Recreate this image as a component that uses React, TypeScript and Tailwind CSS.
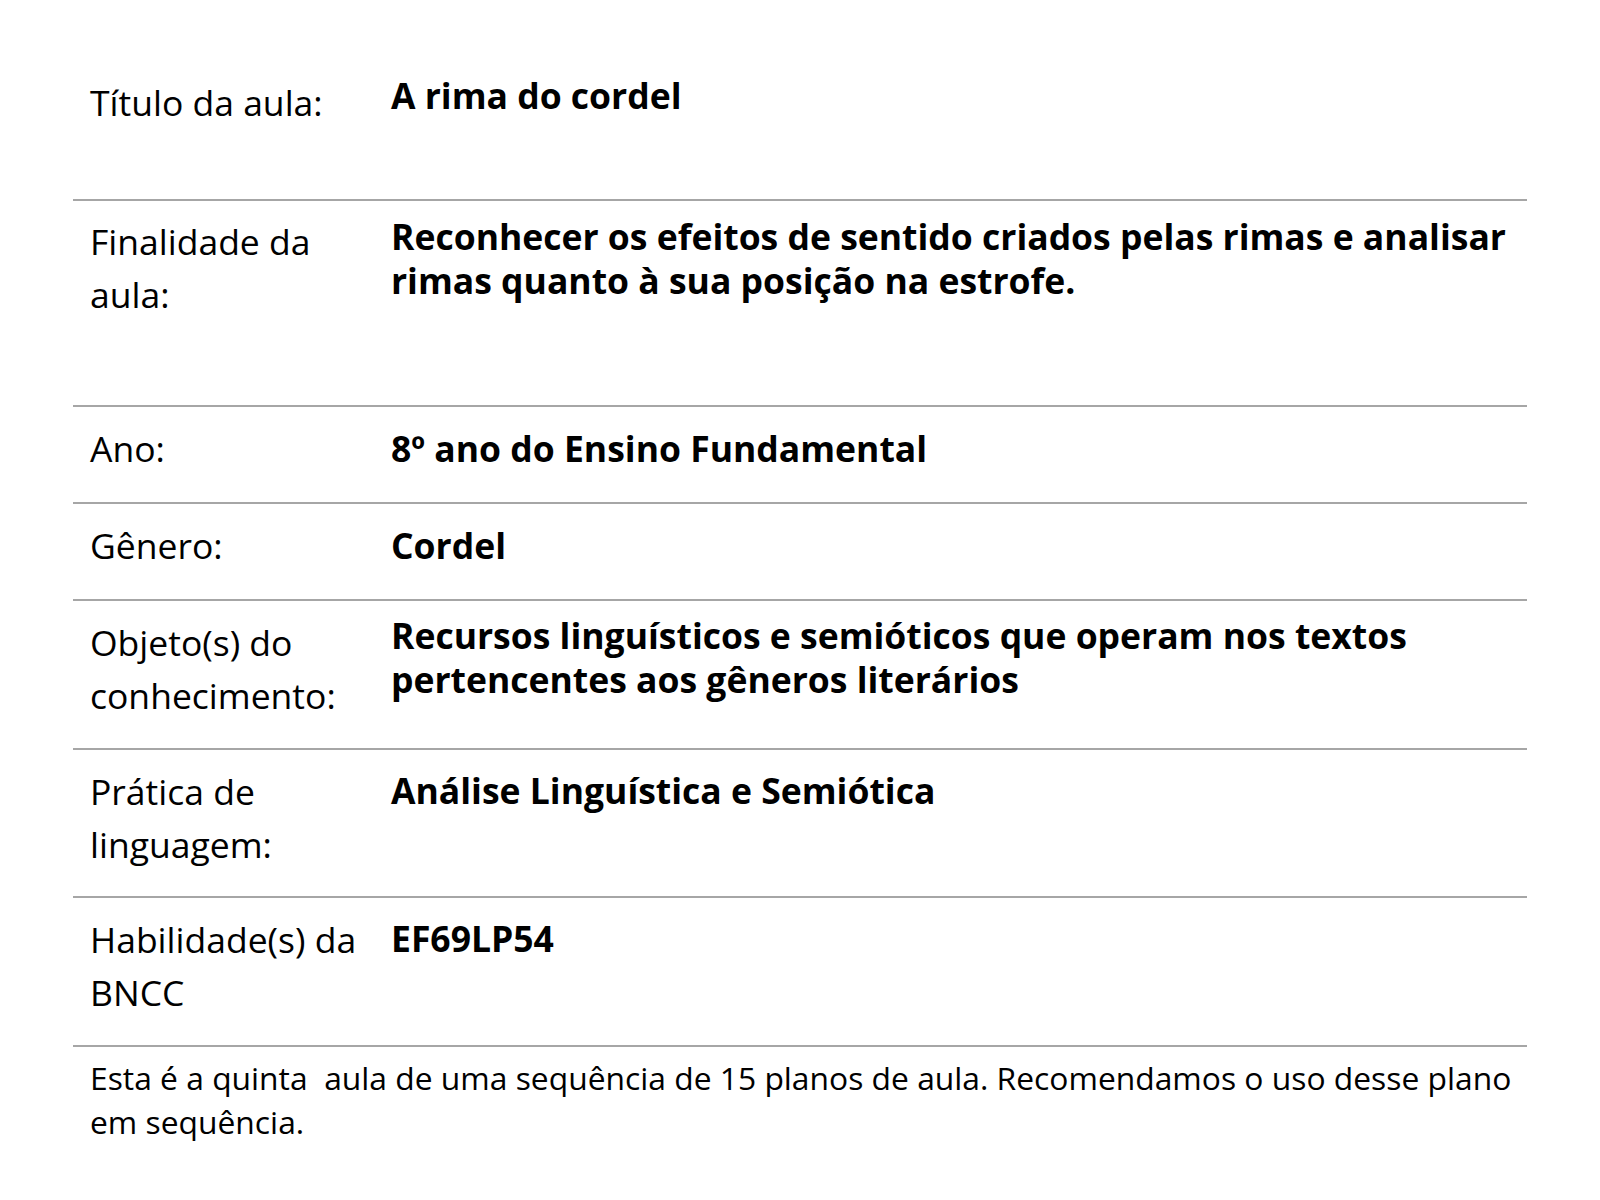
import React from "react";

type Row = {
  label: React.ReactNode;
  value: React.ReactNode;
  rowCls: string;
  valCls: string;
};

const rows: Row[] = [
  {
    label: "Título da aula:",
    value: "A rima do cordel",
    rowCls: "pt-0 pb-[70px]",
    valCls: "-mt-[3px]",
  },
  {
    label: (
      <>
        Finalidade da
        <br />
        aula:
      </>
    ),
    value:
      "Reconhecer os efeitos de sentido criados pelas rimas e analisar rimas quanto à sua posição na estrofe.",
    rowCls: "pt-[14px] pb-[84px]",
    valCls: "-mt-[1px]",
  },
  {
    label: "Ano:",
    value: "8º ano do Ensino Fundamental",
    rowCls: "pt-[15px] pb-[27px]",
    valCls: "pt-[4px]",
  },
  {
    label: "Gênero:",
    value: "Cordel",
    rowCls: "pt-[15px] pb-[27px]",
    valCls: "pt-[4px]",
  },
  {
    label: (
      <>
        Objeto(s) do
        <br />
        conhecimento:
      </>
    ),
    value:
      "Recursos linguísticos e semióticos que operam nos textos pertencentes aos gêneros literários",
    rowCls: "pt-[15px] pb-[26px]",
    valCls: "-mt-[3px]",
  },
  {
    label: (
      <>
        Prática de
        <br />
        linguagem:
      </>
    ),
    value: "Análise Linguística e Semiótica",
    rowCls: "pt-[15px] pb-[25px]",
    valCls: "pt-[3px]",
  },
  {
    label: (
      <>
        Habilidade(s) da
        <br />
        BNCC
      </>
    ),
    value: "EF69LP54",
    rowCls: "pt-[15px] pb-[26px]",
    valCls: "pt-[3px]",
  },
];

export default function App() {
  return (
    <div
      className="w-[1600px] h-[1200px] bg-white text-black"
      style={{ fontFamily: '"Open Sans", "Noto Sans", sans-serif' }}
    >
      <div className="ml-[73px] w-[1454px] pt-[76px]">
        {rows.map((r, i) => (
          <div
            key={i}
            className={`flex border-b-2 border-[#a6a6a6] ${r.rowCls}`}
          >
            <div className="w-[318px] shrink-0 pl-[17px] text-[35.5px] leading-[53px] font-normal">
              {r.label}
            </div>
            <div
              className={`flex-1 text-[35.5px] leading-[44px] font-bold ${r.valCls}`}
            >
              {r.value}
            </div>
          </div>
        ))}
        <div className="pl-[17px] pr-0 pt-[9px] text-[31.8px] leading-[44px]">
          Esta é a quinta&nbsp; aula de uma sequência de 15 planos de aula.
          Recomendamos o uso desse plano em sequência.
        </div>
      </div>
    </div>
  );
}
